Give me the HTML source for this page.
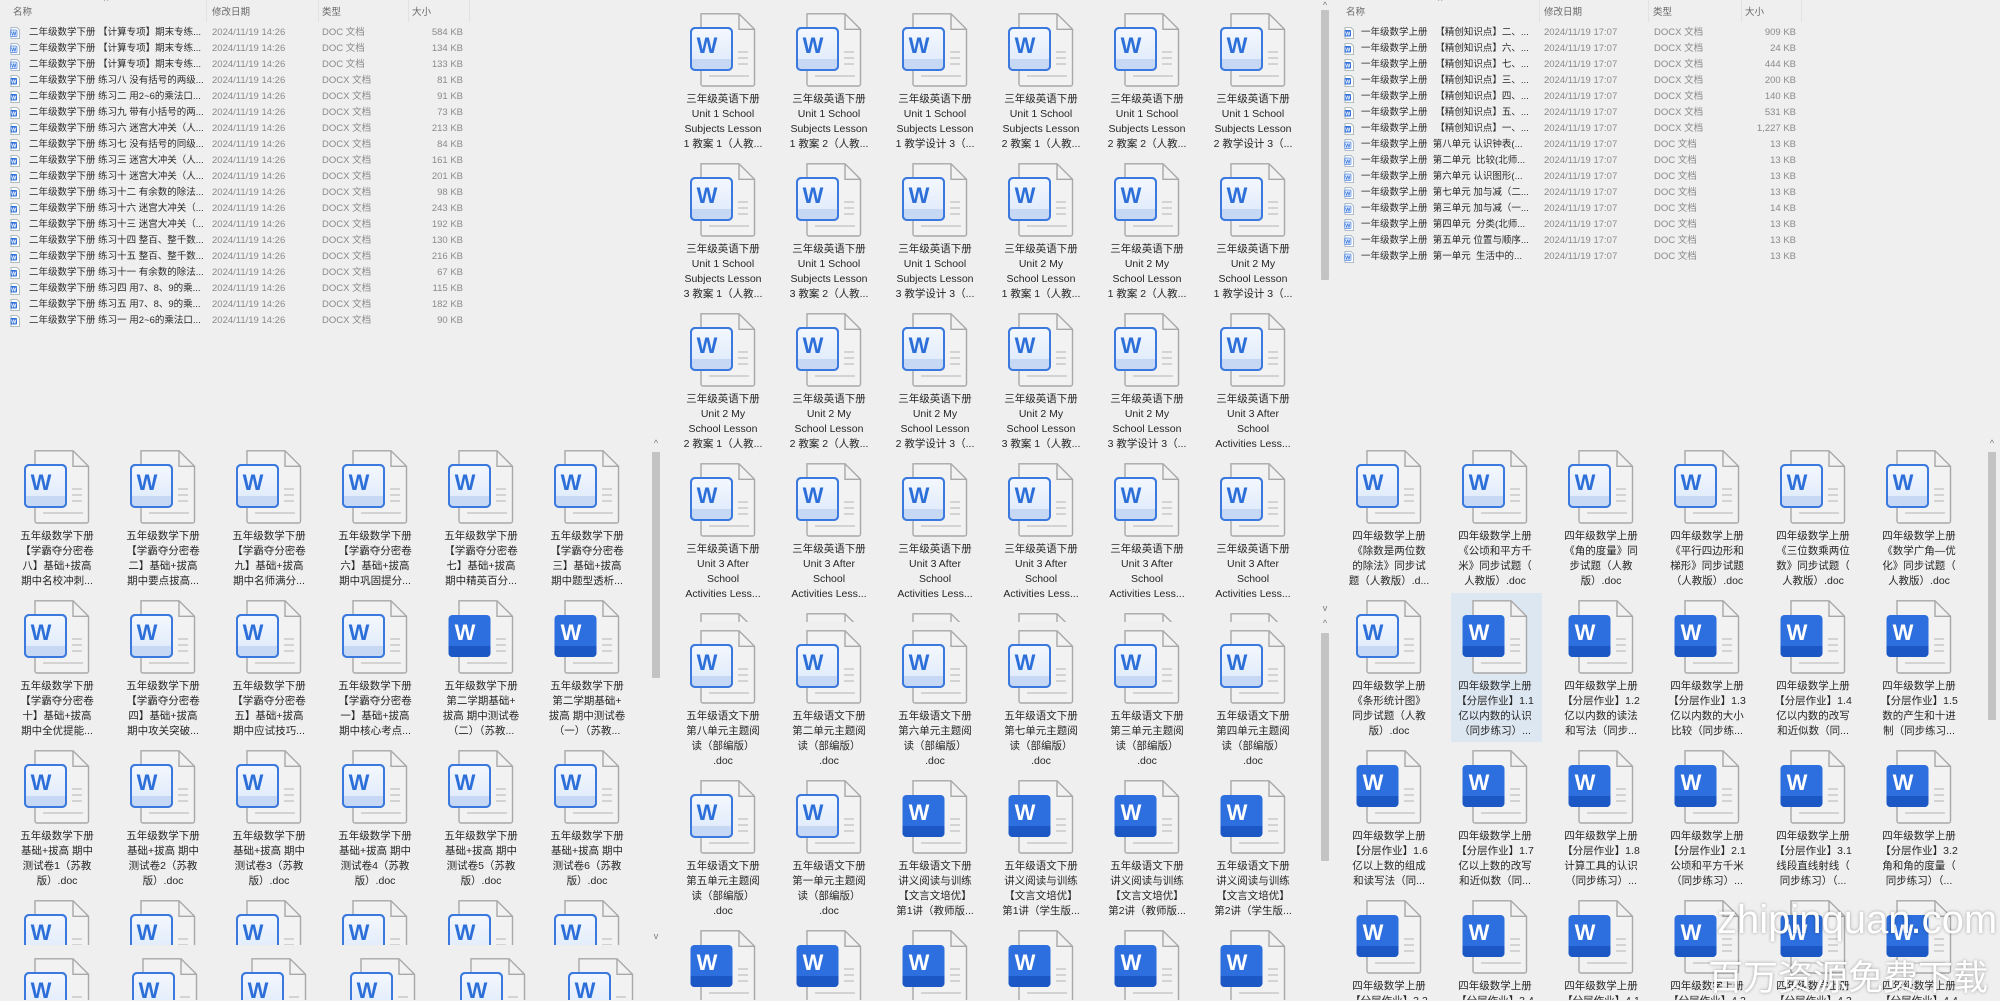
<!DOCTYPE html>
<html><head><meta charset="utf-8">
<style>
*{margin:0;padding:0;box-sizing:border-box}
body{width:2000px;height:1000px;overflow:hidden;background:#efefef;position:relative;font-family:"Liberation Sans","Noto Sans CJK SC",sans-serif}
.pane{position:absolute;overflow:hidden;background:#efefef}
.it{position:absolute;width:106px;text-align:center;font-size:10.5px;line-height:15px;color:#262626;white-space:nowrap}
.it svg{display:block;width:66px;height:74px;margin-left:20px;margin-bottom:5px}
.sel{position:absolute;background:#dde7f1}
.row{position:absolute;height:16px;font-size:9.5px;line-height:16px;white-space:nowrap}
.row span{position:absolute;top:0}
.nm{color:#2a2a2a}.dt{color:#8a8a8a}.sz{color:#8a8a8a;text-align:right}
.hd{position:absolute;font-size:9.5px;color:#6a6a6a;top:4px}
.sep{position:absolute;top:0;width:1px;height:22px;background:#e2e2e2}
.li{position:absolute;top:2px;width:10px;height:12px}
.sb{position:absolute;width:8px;background:#c3c3c3;border-radius:1px}
.ar{position:absolute;font-size:9px;color:#777;width:10px;text-align:center}
.wm{position:absolute;color:#fff;text-shadow:0 0 3px rgba(0,0,0,.35);white-space:nowrap}
</style></head><body>
<svg width="0" height="0" style="position:absolute">
<defs>
<linearGradient id="gl" x1="0" y1="0" x2="0" y2="1"><stop offset="0" stop-color="#f4f8fe"/><stop offset="1" stop-color="#dce8fa"/></linearGradient>
<symbol id="pg" viewBox="0 0 66 74">
<path d="M11 0.8h38l15.5 15.5v54.7a2 2 0 0 1-2 2H13a2 2 0 0 1-2-2z" fill="#f2f2f2" stroke="#a8a8a8" stroke-width="1.4"/>
<path d="M49 0.8v15.5h15.5" fill="none" stroke="#a8a8a8" stroke-width="1.4"/>
<path d="M48 39h10M48 45h10M48 51h10M19 63h40" stroke="#d3d3d3" stroke-width="2"/>
</symbol>
<symbol id="L" viewBox="0 0 66 74">
<use href="#pg"/>
<rect x="1" y="15" width="41" height="42" rx="4" fill="url(#gl)" stroke="#3b79de" stroke-width="2"/>
<path d="M2 46h39v9a2 2 0 0 1-2 2H4a2 2 0 0 1-2-2z" fill="#c7d8f5"/>
<rect x="1" y="15" width="41" height="42" rx="4" fill="none" stroke="#3b79de" stroke-width="2"/>
<text x="17" y="40" font-family="Liberation Sans" font-weight="bold" font-size="22" fill="#2d6fd9" text-anchor="middle">W</text>
</symbol>
<symbol id="D" viewBox="0 0 66 74">
<use href="#pg"/>
<rect x="0.5" y="15" width="42" height="42" rx="4" fill="#2d6fde"/>
<path d="M0.5 46h42v7a4 4 0 0 1-4 4H4.5a4 4 0 0 1-4-4z" fill="#1c58c5"/>
<text x="17" y="40" font-family="Liberation Sans" font-weight="bold" font-size="22" fill="#fff" text-anchor="middle">W</text>
</symbol>
<symbol id="sx" viewBox="0 0 10 12">
<path d="M1 0.5h6l2.5 2.5v8.5h-8.5z" fill="#fff" stroke="#9aa" stroke-width=".8"/>
<rect x="0.5" y="3" width="6.5" height="6.5" rx="1" fill="#2f6fd8"/>
<text x="3.75" y="8.3" font-family="Liberation Sans" font-size="5.5" font-weight="bold" fill="#fff" text-anchor="middle">W</text>
</symbol>
<symbol id="sd" viewBox="0 0 10 12">
<path d="M1 0.5h6l2.5 2.5v8.5h-8.5z" fill="#fff" stroke="#9ab" stroke-width=".8"/>
<rect x="0.5" y="3" width="6.5" height="6.5" rx="1" fill="#e8f0fb" stroke="#4a86e0" stroke-width=".7"/>
<text x="3.75" y="8.3" font-family="Liberation Sans" font-size="5.5" font-weight="bold" fill="#2f6fd8" text-anchor="middle">W</text>
</symbol>
</defs></svg>

<!-- LEFT TOP LIST -->
<div class="hd" style="left:13px">名称</div><div class="hd" style="left:104px;top:-4px;color:#999">^</div>
<div class="sep" style="left:206px"></div><div class="hd" style="left:212px">修改日期</div>
<div class="sep" style="left:318px"></div><div class="hd" style="left:322px">类型</div>
<div class="sep" style="left:408px"></div><div class="hd" style="left:412px">大小</div>
<div class="sep" style="left:469px"></div>

<div class="row" style="top:25px;left:0;width:470px"><svg class="li" style="left:10px"><use href="#sd"/></svg><span class="nm" style="left:29px">二年级数学下册 【计算专项】期末专练...</span><span class="dt" style="left:212px">2024/11/19 14:26</span><span class="dt" style="left:322px">DOC 文档</span><span class="sz" style="right:7px">584 KB</span></div>
<div class="row" style="top:41px;left:0;width:470px"><svg class="li" style="left:10px"><use href="#sd"/></svg><span class="nm" style="left:29px">二年级数学下册 【计算专项】期末专练...</span><span class="dt" style="left:212px">2024/11/19 14:26</span><span class="dt" style="left:322px">DOC 文档</span><span class="sz" style="right:7px">134 KB</span></div>
<div class="row" style="top:57px;left:0;width:470px"><svg class="li" style="left:10px"><use href="#sd"/></svg><span class="nm" style="left:29px">二年级数学下册 【计算专项】期末专练...</span><span class="dt" style="left:212px">2024/11/19 14:26</span><span class="dt" style="left:322px">DOC 文档</span><span class="sz" style="right:7px">133 KB</span></div>
<div class="row" style="top:73px;left:0;width:470px"><svg class="li" style="left:10px"><use href="#sx"/></svg><span class="nm" style="left:29px">二年级数学下册 练习八 没有括号的两级...</span><span class="dt" style="left:212px">2024/11/19 14:26</span><span class="dt" style="left:322px">DOCX 文档</span><span class="sz" style="right:7px">81 KB</span></div>
<div class="row" style="top:89px;left:0;width:470px"><svg class="li" style="left:10px"><use href="#sx"/></svg><span class="nm" style="left:29px">二年级数学下册 练习二 用2~6的乘法口...</span><span class="dt" style="left:212px">2024/11/19 14:26</span><span class="dt" style="left:322px">DOCX 文档</span><span class="sz" style="right:7px">91 KB</span></div>
<div class="row" style="top:105px;left:0;width:470px"><svg class="li" style="left:10px"><use href="#sx"/></svg><span class="nm" style="left:29px">二年级数学下册 练习九 带有小括号的两...</span><span class="dt" style="left:212px">2024/11/19 14:26</span><span class="dt" style="left:322px">DOCX 文档</span><span class="sz" style="right:7px">73 KB</span></div>
<div class="row" style="top:121px;left:0;width:470px"><svg class="li" style="left:10px"><use href="#sx"/></svg><span class="nm" style="left:29px">二年级数学下册 练习六 迷宫大冲关（人...</span><span class="dt" style="left:212px">2024/11/19 14:26</span><span class="dt" style="left:322px">DOCX 文档</span><span class="sz" style="right:7px">213 KB</span></div>
<div class="row" style="top:137px;left:0;width:470px"><svg class="li" style="left:10px"><use href="#sx"/></svg><span class="nm" style="left:29px">二年级数学下册 练习七 没有括号的同级...</span><span class="dt" style="left:212px">2024/11/19 14:26</span><span class="dt" style="left:322px">DOCX 文档</span><span class="sz" style="right:7px">84 KB</span></div>
<div class="row" style="top:153px;left:0;width:470px"><svg class="li" style="left:10px"><use href="#sx"/></svg><span class="nm" style="left:29px">二年级数学下册 练习三 迷宫大冲关（人...</span><span class="dt" style="left:212px">2024/11/19 14:26</span><span class="dt" style="left:322px">DOCX 文档</span><span class="sz" style="right:7px">161 KB</span></div>
<div class="row" style="top:169px;left:0;width:470px"><svg class="li" style="left:10px"><use href="#sx"/></svg><span class="nm" style="left:29px">二年级数学下册 练习十 迷宫大冲关（人...</span><span class="dt" style="left:212px">2024/11/19 14:26</span><span class="dt" style="left:322px">DOCX 文档</span><span class="sz" style="right:7px">201 KB</span></div>
<div class="row" style="top:185px;left:0;width:470px"><svg class="li" style="left:10px"><use href="#sx"/></svg><span class="nm" style="left:29px">二年级数学下册 练习十二 有余数的除法...</span><span class="dt" style="left:212px">2024/11/19 14:26</span><span class="dt" style="left:322px">DOCX 文档</span><span class="sz" style="right:7px">98 KB</span></div>
<div class="row" style="top:201px;left:0;width:470px"><svg class="li" style="left:10px"><use href="#sx"/></svg><span class="nm" style="left:29px">二年级数学下册 练习十六 迷宫大冲关（...</span><span class="dt" style="left:212px">2024/11/19 14:26</span><span class="dt" style="left:322px">DOCX 文档</span><span class="sz" style="right:7px">243 KB</span></div>
<div class="row" style="top:217px;left:0;width:470px"><svg class="li" style="left:10px"><use href="#sx"/></svg><span class="nm" style="left:29px">二年级数学下册 练习十三 迷宫大冲关（...</span><span class="dt" style="left:212px">2024/11/19 14:26</span><span class="dt" style="left:322px">DOCX 文档</span><span class="sz" style="right:7px">192 KB</span></div>
<div class="row" style="top:233px;left:0;width:470px"><svg class="li" style="left:10px"><use href="#sx"/></svg><span class="nm" style="left:29px">二年级数学下册 练习十四 整百、整千数...</span><span class="dt" style="left:212px">2024/11/19 14:26</span><span class="dt" style="left:322px">DOCX 文档</span><span class="sz" style="right:7px">130 KB</span></div>
<div class="row" style="top:249px;left:0;width:470px"><svg class="li" style="left:10px"><use href="#sx"/></svg><span class="nm" style="left:29px">二年级数学下册 练习十五 整百、整千数...</span><span class="dt" style="left:212px">2024/11/19 14:26</span><span class="dt" style="left:322px">DOCX 文档</span><span class="sz" style="right:7px">216 KB</span></div>
<div class="row" style="top:265px;left:0;width:470px"><svg class="li" style="left:10px"><use href="#sx"/></svg><span class="nm" style="left:29px">二年级数学下册 练习十一 有余数的除法...</span><span class="dt" style="left:212px">2024/11/19 14:26</span><span class="dt" style="left:322px">DOCX 文档</span><span class="sz" style="right:7px">67 KB</span></div>
<div class="row" style="top:281px;left:0;width:470px"><svg class="li" style="left:10px"><use href="#sx"/></svg><span class="nm" style="left:29px">二年级数学下册 练习四 用7、8、9的乘...</span><span class="dt" style="left:212px">2024/11/19 14:26</span><span class="dt" style="left:322px">DOCX 文档</span><span class="sz" style="right:7px">115 KB</span></div>
<div class="row" style="top:297px;left:0;width:470px"><svg class="li" style="left:10px"><use href="#sx"/></svg><span class="nm" style="left:29px">二年级数学下册 练习五 用7、8、9的乘...</span><span class="dt" style="left:212px">2024/11/19 14:26</span><span class="dt" style="left:322px">DOCX 文档</span><span class="sz" style="right:7px">182 KB</span></div>
<div class="row" style="top:313px;left:0;width:470px"><svg class="li" style="left:10px"><use href="#sx"/></svg><span class="nm" style="left:29px">二年级数学下册 练习一 用2~6的乘法口...</span><span class="dt" style="left:212px">2024/11/19 14:26</span><span class="dt" style="left:322px">DOCX 文档</span><span class="sz" style="right:7px">90 KB</span></div>

<!-- RIGHT TOP LIST -->
<div class="hd" style="left:1346px">名称</div><div class="hd" style="left:1438px;top:-4px;color:#999">^</div>
<div class="sep" style="left:1539px"></div><div class="hd" style="left:1544px">修改日期</div>
<div class="sep" style="left:1648px"></div><div class="hd" style="left:1653px">类型</div>
<div class="sep" style="left:1741px"></div><div class="hd" style="left:1745px">大小</div>
<div class="sep" style="left:1801px"></div>

<div class="row" style="top:25px;left:1330px;width:470px"><svg class="li" style="left:14px"><use href="#sx"/></svg><span class="nm" style="left:31px">一年级数学上册 &nbsp;&nbsp;【精创知识点】二、...</span><span class="dt" style="left:214px">2024/11/19 17:07</span><span class="dt" style="left:324px">DOCX 文档</span><span class="sz" style="right:4px">909 KB</span></div>
<div class="row" style="top:41px;left:1330px;width:470px"><svg class="li" style="left:14px"><use href="#sx"/></svg><span class="nm" style="left:31px">一年级数学上册 &nbsp;&nbsp;【精创知识点】六、...</span><span class="dt" style="left:214px">2024/11/19 17:07</span><span class="dt" style="left:324px">DOCX 文档</span><span class="sz" style="right:4px">24 KB</span></div>
<div class="row" style="top:57px;left:1330px;width:470px"><svg class="li" style="left:14px"><use href="#sx"/></svg><span class="nm" style="left:31px">一年级数学上册 &nbsp;&nbsp;【精创知识点】七、...</span><span class="dt" style="left:214px">2024/11/19 17:07</span><span class="dt" style="left:324px">DOCX 文档</span><span class="sz" style="right:4px">444 KB</span></div>
<div class="row" style="top:73px;left:1330px;width:470px"><svg class="li" style="left:14px"><use href="#sx"/></svg><span class="nm" style="left:31px">一年级数学上册 &nbsp;&nbsp;【精创知识点】三、...</span><span class="dt" style="left:214px">2024/11/19 17:07</span><span class="dt" style="left:324px">DOCX 文档</span><span class="sz" style="right:4px">200 KB</span></div>
<div class="row" style="top:89px;left:1330px;width:470px"><svg class="li" style="left:14px"><use href="#sx"/></svg><span class="nm" style="left:31px">一年级数学上册 &nbsp;&nbsp;【精创知识点】四、...</span><span class="dt" style="left:214px">2024/11/19 17:07</span><span class="dt" style="left:324px">DOCX 文档</span><span class="sz" style="right:4px">140 KB</span></div>
<div class="row" style="top:105px;left:1330px;width:470px"><svg class="li" style="left:14px"><use href="#sx"/></svg><span class="nm" style="left:31px">一年级数学上册 &nbsp;&nbsp;【精创知识点】五、...</span><span class="dt" style="left:214px">2024/11/19 17:07</span><span class="dt" style="left:324px">DOCX 文档</span><span class="sz" style="right:4px">531 KB</span></div>
<div class="row" style="top:121px;left:1330px;width:470px"><svg class="li" style="left:14px"><use href="#sx"/></svg><span class="nm" style="left:31px">一年级数学上册 &nbsp;&nbsp;【精创知识点】一、...</span><span class="dt" style="left:214px">2024/11/19 17:07</span><span class="dt" style="left:324px">DOCX 文档</span><span class="sz" style="right:4px">1,227 KB</span></div>
<div class="row" style="top:137px;left:1330px;width:470px"><svg class="li" style="left:14px"><use href="#sd"/></svg><span class="nm" style="left:31px">一年级数学上册 &nbsp;第八单元 认识钟表(...</span><span class="dt" style="left:214px">2024/11/19 17:07</span><span class="dt" style="left:324px">DOC 文档</span><span class="sz" style="right:4px">13 KB</span></div>
<div class="row" style="top:153px;left:1330px;width:470px"><svg class="li" style="left:14px"><use href="#sd"/></svg><span class="nm" style="left:31px">一年级数学上册 &nbsp;第二单元 &nbsp;比较(北师...</span><span class="dt" style="left:214px">2024/11/19 17:07</span><span class="dt" style="left:324px">DOC 文档</span><span class="sz" style="right:4px">13 KB</span></div>
<div class="row" style="top:169px;left:1330px;width:470px"><svg class="li" style="left:14px"><use href="#sd"/></svg><span class="nm" style="left:31px">一年级数学上册 &nbsp;第六单元 认识图形(...</span><span class="dt" style="left:214px">2024/11/19 17:07</span><span class="dt" style="left:324px">DOC 文档</span><span class="sz" style="right:4px">13 KB</span></div>
<div class="row" style="top:185px;left:1330px;width:470px"><svg class="li" style="left:14px"><use href="#sd"/></svg><span class="nm" style="left:31px">一年级数学上册 &nbsp;第七单元 加与减（二...</span><span class="dt" style="left:214px">2024/11/19 17:07</span><span class="dt" style="left:324px">DOC 文档</span><span class="sz" style="right:4px">13 KB</span></div>
<div class="row" style="top:201px;left:1330px;width:470px"><svg class="li" style="left:14px"><use href="#sd"/></svg><span class="nm" style="left:31px">一年级数学上册 &nbsp;第三单元 加与减（一...</span><span class="dt" style="left:214px">2024/11/19 17:07</span><span class="dt" style="left:324px">DOC 文档</span><span class="sz" style="right:4px">14 KB</span></div>
<div class="row" style="top:217px;left:1330px;width:470px"><svg class="li" style="left:14px"><use href="#sd"/></svg><span class="nm" style="left:31px">一年级数学上册 &nbsp;第四单元 &nbsp;分类(北师...</span><span class="dt" style="left:214px">2024/11/19 17:07</span><span class="dt" style="left:324px">DOC 文档</span><span class="sz" style="right:4px">13 KB</span></div>
<div class="row" style="top:233px;left:1330px;width:470px"><svg class="li" style="left:14px"><use href="#sd"/></svg><span class="nm" style="left:31px">一年级数学上册 &nbsp;第五单元 位置与顺序...</span><span class="dt" style="left:214px">2024/11/19 17:07</span><span class="dt" style="left:324px">DOC 文档</span><span class="sz" style="right:4px">13 KB</span></div>
<div class="row" style="top:249px;left:1330px;width:470px"><svg class="li" style="left:14px"><use href="#sd"/></svg><span class="nm" style="left:31px">一年级数学上册 &nbsp;第一单元 &nbsp;生活中的...</span><span class="dt" style="left:214px">2024/11/19 17:07</span><span class="dt" style="left:324px">DOC 文档</span><span class="sz" style="right:4px">13 KB</span></div>

<!-- LEFT BOTTOM A -->
<div class="pane" style="left:0;top:440px;width:650px;height:505px">
<div class="it" style="left:4px;top:10px"><svg><use href="#L"/></svg>五年级数学下册<br>【学霸夺分密卷<br>八】基础+拔高<br>期中名校冲刺...</div>
<div class="it" style="left:110px;top:10px"><svg><use href="#L"/></svg>五年级数学下册<br>【学霸夺分密卷<br>二】基础+拔高<br>期中要点拔高...</div>
<div class="it" style="left:216px;top:10px"><svg><use href="#L"/></svg>五年级数学下册<br>【学霸夺分密卷<br>九】基础+拔高<br>期中名师满分...</div>
<div class="it" style="left:322px;top:10px"><svg><use href="#L"/></svg>五年级数学下册<br>【学霸夺分密卷<br>六】基础+拔高<br>期中巩固提分...</div>
<div class="it" style="left:428px;top:10px"><svg><use href="#L"/></svg>五年级数学下册<br>【学霸夺分密卷<br>七】基础+拔高<br>期中精英百分...</div>
<div class="it" style="left:534px;top:10px"><svg><use href="#L"/></svg>五年级数学下册<br>【学霸夺分密卷<br>三】基础+拔高<br>期中题型透析...</div>
<div class="it" style="left:4px;top:160px"><svg><use href="#L"/></svg>五年级数学下册<br>【学霸夺分密卷<br>十】基础+拔高<br>期中全优提能...</div>
<div class="it" style="left:110px;top:160px"><svg><use href="#L"/></svg>五年级数学下册<br>【学霸夺分密卷<br>四】基础+拔高<br>期中攻关突破...</div>
<div class="it" style="left:216px;top:160px"><svg><use href="#L"/></svg>五年级数学下册<br>【学霸夺分密卷<br>五】基础+拔高<br>期中应试技巧...</div>
<div class="it" style="left:322px;top:160px"><svg><use href="#L"/></svg>五年级数学下册<br>【学霸夺分密卷<br>一】基础+拔高<br>期中核心考点...</div>
<div class="it" style="left:428px;top:160px"><svg><use href="#D"/></svg>五年级数学下册<br>第二学期基础+<br>拔高 期中测试卷<br>（二）（苏教...</div>
<div class="it" style="left:534px;top:160px"><svg><use href="#D"/></svg>五年级数学下册<br>第二学期基础+<br>拔高 期中测试卷<br>（一）（苏教...</div>
<div class="it" style="left:4px;top:310px"><svg><use href="#L"/></svg>五年级数学下册<br>基础+拔高 期中<br>测试卷1（苏教<br>版）.doc</div>
<div class="it" style="left:110px;top:310px"><svg><use href="#L"/></svg>五年级数学下册<br>基础+拔高 期中<br>测试卷2（苏教<br>版）.doc</div>
<div class="it" style="left:216px;top:310px"><svg><use href="#L"/></svg>五年级数学下册<br>基础+拔高 期中<br>测试卷3（苏教<br>版）.doc</div>
<div class="it" style="left:322px;top:310px"><svg><use href="#L"/></svg>五年级数学下册<br>基础+拔高 期中<br>测试卷4（苏教<br>版）.doc</div>
<div class="it" style="left:428px;top:310px"><svg><use href="#L"/></svg>五年级数学下册<br>基础+拔高 期中<br>测试卷5（苏教<br>版）.doc</div>
<div class="it" style="left:534px;top:310px"><svg><use href="#L"/></svg>五年级数学下册<br>基础+拔高 期中<br>测试卷6（苏教<br>版）.doc</div>
<div class="it" style="left:4px;top:460px"><svg><use href="#L"/></svg></div>
<div class="it" style="left:110px;top:460px"><svg><use href="#L"/></svg></div>
<div class="it" style="left:216px;top:460px"><svg><use href="#L"/></svg></div>
<div class="it" style="left:322px;top:460px"><svg><use href="#L"/></svg></div>
<div class="it" style="left:428px;top:460px"><svg><use href="#L"/></svg></div>
<div class="it" style="left:534px;top:460px"><svg><use href="#L"/></svg></div>
</div>
<!-- LEFT BOTTOM B -->
<div class="pane" style="left:0;top:945px;width:650px;height:55px">
<div class="it" style="left:4px;top:13px"><svg><use href="#L"/></svg></div>
<div class="it" style="left:112px;top:13px"><svg><use href="#L"/></svg></div>
<div class="it" style="left:221px;top:13px"><svg><use href="#L"/></svg></div>
<div class="it" style="left:330px;top:13px"><svg><use href="#L"/></svg></div>
<div class="it" style="left:440px;top:13px"><svg><use href="#L"/></svg></div>
<div class="it" style="left:548px;top:13px"><svg><use href="#L"/></svg></div>
</div>
<div class="ar" style="left:651px;top:438px">^</div>
<div class="sb" style="left:652px;top:452px;height:226px"></div>
<div class="ar" style="left:651px;top:931px">v</div>

<!-- MIDDLE A -->
<div class="pane" style="left:665px;top:0;width:653px;height:622px">
<div class="it" style="left:5px;top:13px"><svg><use href="#L"/></svg>三年级英语下册<br>Unit 1 School<br>Subjects Lesson<br>1 教案 1（人教...</div>
<div class="it" style="left:111px;top:13px"><svg><use href="#L"/></svg>三年级英语下册<br>Unit 1 School<br>Subjects Lesson<br>1 教案 2（人教...</div>
<div class="it" style="left:217px;top:13px"><svg><use href="#L"/></svg>三年级英语下册<br>Unit 1 School<br>Subjects Lesson<br>1 教学设计 3（...</div>
<div class="it" style="left:323px;top:13px"><svg><use href="#L"/></svg>三年级英语下册<br>Unit 1 School<br>Subjects Lesson<br>2 教案 1（人教...</div>
<div class="it" style="left:429px;top:13px"><svg><use href="#L"/></svg>三年级英语下册<br>Unit 1 School<br>Subjects Lesson<br>2 教案 2（人教...</div>
<div class="it" style="left:535px;top:13px"><svg><use href="#L"/></svg>三年级英语下册<br>Unit 1 School<br>Subjects Lesson<br>2 教学设计 3（...</div>
<div class="it" style="left:5px;top:163px"><svg><use href="#L"/></svg>三年级英语下册<br>Unit 1 School<br>Subjects Lesson<br>3 教案 1（人教...</div>
<div class="it" style="left:111px;top:163px"><svg><use href="#L"/></svg>三年级英语下册<br>Unit 1 School<br>Subjects Lesson<br>3 教案 2（人教...</div>
<div class="it" style="left:217px;top:163px"><svg><use href="#L"/></svg>三年级英语下册<br>Unit 1 School<br>Subjects Lesson<br>3 教学设计 3（...</div>
<div class="it" style="left:323px;top:163px"><svg><use href="#L"/></svg>三年级英语下册<br>Unit 2 My<br>School Lesson<br>1 教案 1（人教...</div>
<div class="it" style="left:429px;top:163px"><svg><use href="#L"/></svg>三年级英语下册<br>Unit 2 My<br>School Lesson<br>1 教案 2（人教...</div>
<div class="it" style="left:535px;top:163px"><svg><use href="#L"/></svg>三年级英语下册<br>Unit 2 My<br>School Lesson<br>1 教学设计 3（...</div>
<div class="it" style="left:5px;top:313px"><svg><use href="#L"/></svg>三年级英语下册<br>Unit 2 My<br>School Lesson<br>2 教案 1（人教...</div>
<div class="it" style="left:111px;top:313px"><svg><use href="#L"/></svg>三年级英语下册<br>Unit 2 My<br>School Lesson<br>2 教案 2（人教...</div>
<div class="it" style="left:217px;top:313px"><svg><use href="#L"/></svg>三年级英语下册<br>Unit 2 My<br>School Lesson<br>2 教学设计 3（...</div>
<div class="it" style="left:323px;top:313px"><svg><use href="#L"/></svg>三年级英语下册<br>Unit 2 My<br>School Lesson<br>3 教案 1（人教...</div>
<div class="it" style="left:429px;top:313px"><svg><use href="#L"/></svg>三年级英语下册<br>Unit 2 My<br>School Lesson<br>3 教学设计 3（...</div>
<div class="it" style="left:535px;top:313px"><svg><use href="#L"/></svg>三年级英语下册<br>Unit 3 After<br>School<br>Activities Less...</div>
<div class="it" style="left:5px;top:463px"><svg><use href="#L"/></svg>三年级英语下册<br>Unit 3 After<br>School<br>Activities Less...</div>
<div class="it" style="left:111px;top:463px"><svg><use href="#L"/></svg>三年级英语下册<br>Unit 3 After<br>School<br>Activities Less...</div>
<div class="it" style="left:217px;top:463px"><svg><use href="#L"/></svg>三年级英语下册<br>Unit 3 After<br>School<br>Activities Less...</div>
<div class="it" style="left:323px;top:463px"><svg><use href="#L"/></svg>三年级英语下册<br>Unit 3 After<br>School<br>Activities Less...</div>
<div class="it" style="left:429px;top:463px"><svg><use href="#L"/></svg>三年级英语下册<br>Unit 3 After<br>School<br>Activities Less...</div>
<div class="it" style="left:535px;top:463px"><svg><use href="#L"/></svg>三年级英语下册<br>Unit 3 After<br>School<br>Activities Less...</div>
<div class="it" style="left:5px;top:613px"><svg><use href="#L"/></svg></div>
<div class="it" style="left:111px;top:613px"><svg><use href="#L"/></svg></div>
<div class="it" style="left:217px;top:613px"><svg><use href="#L"/></svg></div>
<div class="it" style="left:323px;top:613px"><svg><use href="#L"/></svg></div>
<div class="it" style="left:429px;top:613px"><svg><use href="#L"/></svg></div>
<div class="it" style="left:535px;top:613px"><svg><use href="#L"/></svg></div>
</div>
<!-- MIDDLE B -->
<div class="pane" style="left:665px;top:622px;width:653px;height:378px">
<div class="it" style="left:5px;top:8px"><svg><use href="#L"/></svg>五年级语文下册<br>第八单元主题阅<br>读（部编版）<br>.doc</div>
<div class="it" style="left:111px;top:8px"><svg><use href="#L"/></svg>五年级语文下册<br>第二单元主题阅<br>读（部编版）<br>.doc</div>
<div class="it" style="left:217px;top:8px"><svg><use href="#L"/></svg>五年级语文下册<br>第六单元主题阅<br>读（部编版）<br>.doc</div>
<div class="it" style="left:323px;top:8px"><svg><use href="#L"/></svg>五年级语文下册<br>第七单元主题阅<br>读（部编版）<br>.doc</div>
<div class="it" style="left:429px;top:8px"><svg><use href="#L"/></svg>五年级语文下册<br>第三单元主题阅<br>读（部编版）<br>.doc</div>
<div class="it" style="left:535px;top:8px"><svg><use href="#L"/></svg>五年级语文下册<br>第四单元主题阅<br>读（部编版）<br>.doc</div>
<div class="it" style="left:5px;top:158px"><svg><use href="#L"/></svg>五年级语文下册<br>第五单元主题阅<br>读（部编版）<br>.doc</div>
<div class="it" style="left:111px;top:158px"><svg><use href="#L"/></svg>五年级语文下册<br>第一单元主题阅<br>读（部编版）<br>.doc</div>
<div class="it" style="left:217px;top:158px"><svg><use href="#D"/></svg>五年级语文下册<br>讲义阅读与训练<br>【文言文培优】<br>第1讲（教师版...</div>
<div class="it" style="left:323px;top:158px"><svg><use href="#D"/></svg>五年级语文下册<br>讲义阅读与训练<br>【文言文培优】<br>第1讲（学生版...</div>
<div class="it" style="left:429px;top:158px"><svg><use href="#D"/></svg>五年级语文下册<br>讲义阅读与训练<br>【文言文培优】<br>第2讲（教师版...</div>
<div class="it" style="left:535px;top:158px"><svg><use href="#D"/></svg>五年级语文下册<br>讲义阅读与训练<br>【文言文培优】<br>第2讲（学生版...</div>
<div class="it" style="left:5px;top:308px"><svg><use href="#D"/></svg></div>
<div class="it" style="left:111px;top:308px"><svg><use href="#D"/></svg></div>
<div class="it" style="left:217px;top:308px"><svg><use href="#D"/></svg></div>
<div class="it" style="left:323px;top:308px"><svg><use href="#D"/></svg></div>
<div class="it" style="left:429px;top:308px"><svg><use href="#D"/></svg></div>
<div class="it" style="left:535px;top:308px"><svg><use href="#D"/></svg></div>
</div>
<div class="ar" style="left:1320px;top:0">^</div>
<div class="sb" style="left:1321px;top:10px;height:270px"></div>
<div class="ar" style="left:1320px;top:603px">v</div>
<div class="ar" style="left:1320px;top:618px">^</div>
<div class="sb" style="left:1321px;top:633px;height:228px"></div>

<!-- RIGHT BOTTOM -->
<div class="pane" style="left:1332px;top:440px;width:653px;height:560px">
<div class="sel" style="left:119px;top:153px;width:91px;height:149px"></div>
<div class="it" style="left:4px;top:10px"><svg><use href="#L"/></svg>四年级数学上册<br>《除数是两位数<br>的除法》同步试<br>题（人教版）.d...</div>
<div class="it" style="left:110px;top:10px"><svg><use href="#L"/></svg>四年级数学上册<br>《公顷和平方千<br>米》同步试题（<br>人教版）.doc</div>
<div class="it" style="left:216px;top:10px"><svg><use href="#L"/></svg>四年级数学上册<br>《角的度量》同<br>步试题（人教<br>版）.doc</div>
<div class="it" style="left:322px;top:10px"><svg><use href="#L"/></svg>四年级数学上册<br>《平行四边形和<br>梯形》同步试题<br>（人教版）.doc</div>
<div class="it" style="left:428px;top:10px"><svg><use href="#L"/></svg>四年级数学上册<br>《三位数乘两位<br>数》同步试题（<br>人教版）.doc</div>
<div class="it" style="left:534px;top:10px"><svg><use href="#L"/></svg>四年级数学上册<br>《数学广角—优<br>化》同步试题（<br>人教版）.doc</div>
<div class="it" style="left:4px;top:160px"><svg><use href="#L"/></svg>四年级数学上册<br>《条形统计图》<br>同步试题（人教<br>版）.doc</div>
<div class="it" style="left:110px;top:160px"><svg><use href="#D"/></svg>四年级数学上册<br>【分层作业】1.1<br>亿以内数的认识<br>（同步练习）...</div>
<div class="it" style="left:216px;top:160px"><svg><use href="#D"/></svg>四年级数学上册<br>【分层作业】1.2<br>亿以内数的读法<br>和写法（同步...</div>
<div class="it" style="left:322px;top:160px"><svg><use href="#D"/></svg>四年级数学上册<br>【分层作业】1.3<br>亿以内数的大小<br>比较（同步练...</div>
<div class="it" style="left:428px;top:160px"><svg><use href="#D"/></svg>四年级数学上册<br>【分层作业】1.4<br>亿以内数的改写<br>和近似数（同...</div>
<div class="it" style="left:534px;top:160px"><svg><use href="#D"/></svg>四年级数学上册<br>【分层作业】1.5<br>数的产生和十进<br>制（同步练习...</div>
<div class="it" style="left:4px;top:310px"><svg><use href="#D"/></svg>四年级数学上册<br>【分层作业】1.6<br>亿以上数的组成<br>和读写法（同...</div>
<div class="it" style="left:110px;top:310px"><svg><use href="#D"/></svg>四年级数学上册<br>【分层作业】1.7<br>亿以上数的改写<br>和近似数（同...</div>
<div class="it" style="left:216px;top:310px"><svg><use href="#D"/></svg>四年级数学上册<br>【分层作业】1.8<br>计算工具的认识<br>（同步练习）...</div>
<div class="it" style="left:322px;top:310px"><svg><use href="#D"/></svg>四年级数学上册<br>【分层作业】2.1<br>公顷和平方千米<br>（同步练习）...</div>
<div class="it" style="left:428px;top:310px"><svg><use href="#D"/></svg>四年级数学上册<br>【分层作业】3.1<br>线段直线射线（<br>同步练习）（...</div>
<div class="it" style="left:534px;top:310px"><svg><use href="#D"/></svg>四年级数学上册<br>【分层作业】3.2<br>角和角的度量（<br>同步练习）（...</div>
<div class="it" style="left:4px;top:460px"><svg><use href="#D"/></svg>四年级数学上册<br>【分层作业】3.3</div>
<div class="it" style="left:110px;top:460px"><svg><use href="#D"/></svg>四年级数学上册<br>【分层作业】3.4</div>
<div class="it" style="left:216px;top:460px"><svg><use href="#D"/></svg>四年级数学上册<br>【分层作业】4.1</div>
<div class="it" style="left:322px;top:460px"><svg><use href="#D"/></svg>四年级数学上册<br>【分层作业】4.2</div>
<div class="it" style="left:428px;top:460px"><svg><use href="#D"/></svg>四年级数学上册<br>【分层作业】4.3</div>
<div class="it" style="left:534px;top:460px"><svg><use href="#D"/></svg>四年级数学上册<br>【分层作业】4.4</div>
</div>
<div class="ar" style="left:1987px;top:438px">^</div>
<div class="sb" style="left:1988px;top:452px;height:268px"></div>

<!-- WATERMARK -->
<div class="wm" style="left:1717px;top:898px;font-size:40px;font-family:'Liberation Sans',sans-serif">zhipinquan.com</div>
<div class="wm" style="left:1708px;top:950px;font-size:35px;font-family:'Liberation Sans','Noto Sans CJK SC',sans-serif">百万资源免费下载</div>
</body></html>
